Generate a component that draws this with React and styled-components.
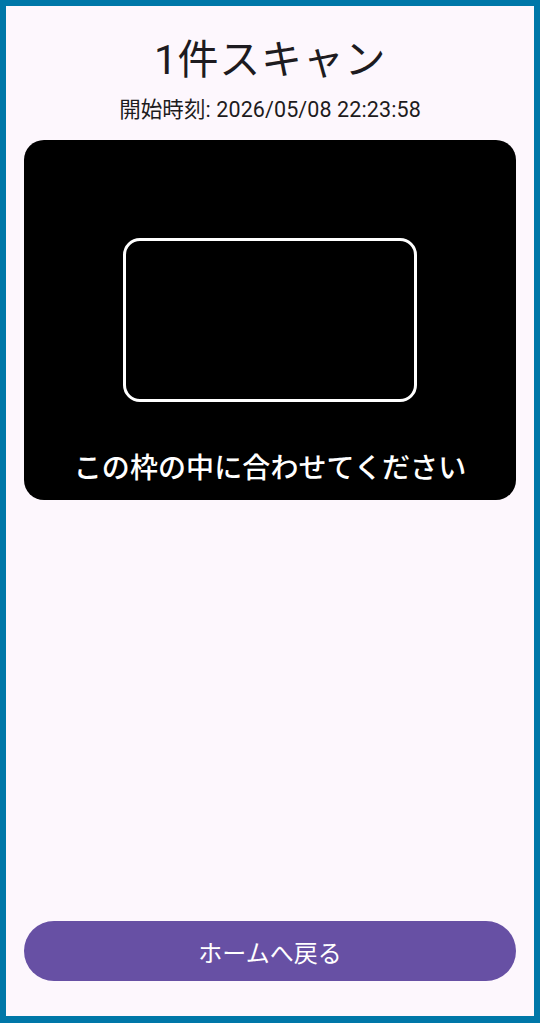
import React from 'react'
import styled, { createGlobalStyle } from 'styled-components'

const GlobalStyle = createGlobalStyle`
  html, body {
    margin: 0;
    padding: 0;
    background: #0077a8;
  }
  * {
    box-sizing: border-box;
  }
`

const Frame = styled.div`
  height: 1023px;
  padding: 6px 6px 7px 6px;
  background: #0077a8;
`

const Screen = styled.main`
  height: 100%;
  background: #fdf7fd;
  display: flex;
  flex-direction: column;
  align-items: center;
  padding: 0 18px 35px 18px;
  font-family: Roboto, 'Noto Sans CJK JP', sans-serif;
  color: #1d1b20;
`

const Title = styled.h1`
  margin: 26px 0 0 0;
  font-size: 41px;
  font-weight: 400;
  line-height: 56px;
  letter-spacing: 0.7px;
`

const StartedAt = styled.p`
  margin: 8px 0 0 0;
  font-size: 21.5px;
  line-height: 28px;
  letter-spacing: 0.1px;
`

const Camera = styled.section`
  margin-top: 16px;
  width: 100%;
  height: 360px;
  background: #000;
  border-radius: 20px;
  display: flex;
  flex-direction: column;
  align-items: center;
  padding-top: 98px;
`

const Guide = styled.div`
  width: 294px;
  height: 164px;
  border: 3px solid #fff;
  border-radius: 17px;
`

const Hint = styled.p`
  margin: 46px 0 0 0;
  color: #fff;
  font-family: 'Noto Sans CJK JP', sans-serif;
  font-size: 28px;
  font-weight: 500;
  line-height: 36px;
  letter-spacing: 0.1px;
`

const Spacer = styled.div`
  flex: 1;
`

const HomeButton = styled.button`
  width: 100%;
  height: 60px;
  border: none;
  border-radius: 30px;
  background: #6750a4;
  color: #fff;
  font-family: 'Noto Sans CJK JP', sans-serif;
  font-size: 24px;
  font-weight: 400;
  cursor: pointer;
`

export default function App() {
  return (
    <>
      <GlobalStyle />
      <Frame>
        <Screen>
          <Title>1件スキャン</Title>
          <StartedAt>開始時刻: 2026/05/08 22:23:58</StartedAt>
          <Camera>
            <Guide />
            <Hint>この枠の中に合わせてください</Hint>
          </Camera>
          <Spacer />
          <HomeButton>ホームへ戻る</HomeButton>
        </Screen>
      </Frame>
    </>
  )
}
